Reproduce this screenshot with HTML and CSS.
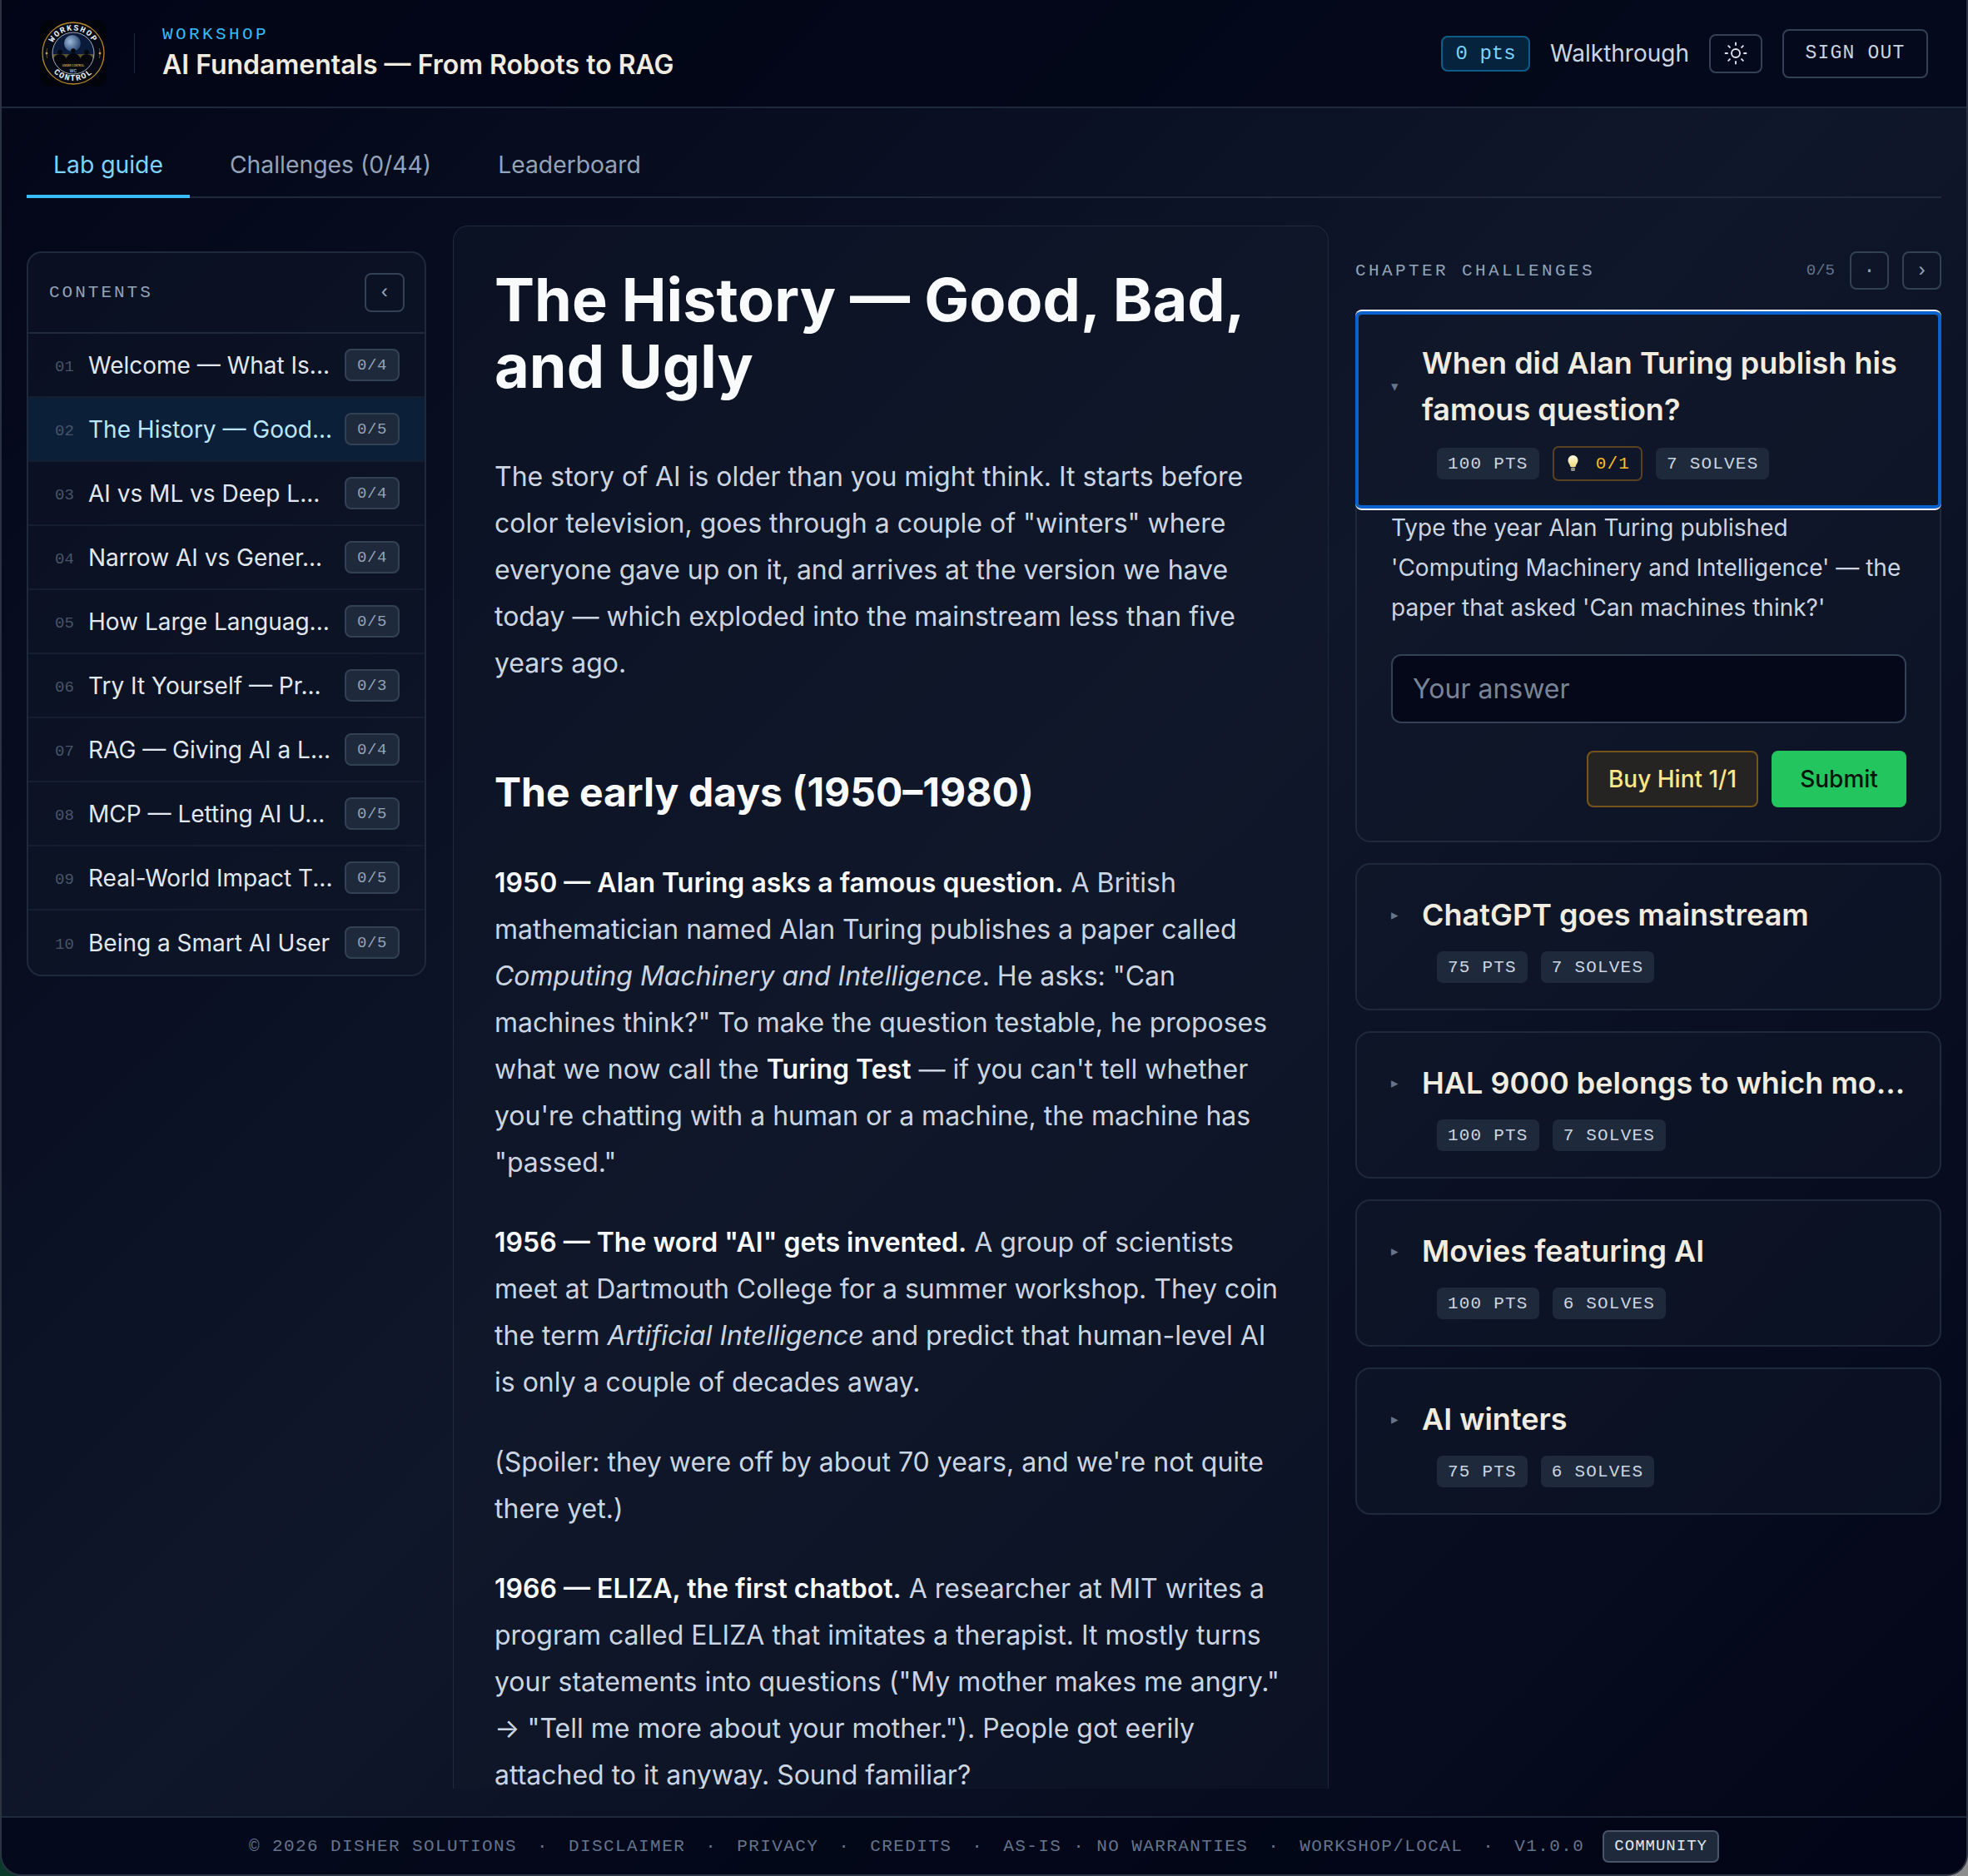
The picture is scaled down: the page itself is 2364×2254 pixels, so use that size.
FILE: index.html
```html
<!DOCTYPE html>
<html lang="en">
<head>
    <meta charset="UTF-8">
    <meta name="viewport" content="width=device-width, initial-scale=1.0">
    <title>AI Fundamentals — From Robots to RAG</title>
    <link rel="stylesheet" href="styles.css">
</head>
<body>
<div class="app">
    <!-- Top bar -->
    <header class="topbar">
        <div class="brand">
            <svg class="logo" viewBox="0 0 80 80" width="80" height="80">
                <defs>
                    <path id="arc-top" d="M12.5 40a27.5 27.5 0 0 1 55 0"/>
                    <path id="arc-bottom" d="M7 40a33 33 0 0 0 66 0"/>
                    <clipPath id="inner-clip"><circle cx="40" cy="40" r="25"/></clipPath>
                    <radialGradient id="moon" cx="0.35" cy="0.4" r="0.75">
                        <stop offset="0" stop-color="#9db9da"/>
                        <stop offset="1" stop-color="#1b3560"/>
                    </radialGradient>
                </defs>
                <rect width="80" height="80" rx="14" fill="#02040c"/>
                <circle cx="40" cy="40" r="37" fill="#060a14" stroke="#b8862d" stroke-width="1.3"/>
                <path d="M8.5 34a32 32 0 0 0 0 12M71.500 34a32 32 0 0 1 0 12" fill="none" stroke="#8c6a26" stroke-width="0.7"/>
                <circle cx="40" cy="40" r="25" fill="#0a1a3a"/>
                <g clip-path="url(#inner-clip)">
                    <circle cx="39" cy="28" r="10" fill="url(#moon)"/>
                    <rect x="14" y="41" width="52" height="6" fill="#5c5330"/>
                    <g fill="#05070d">
                        <circle cx="24" cy="38.500" r="2.800"/>
                        <path d="M15 54c0-9 4-13 9-13s9 4 9 13z"/>
                        <circle cx="40" cy="37" r="2.800"/>
                        <path d="M30 54c0-10 5-14 10-14s10 4 10 14z"/>
                        <circle cx="56" cy="38.500" r="2.800"/>
                        <path d="M47 54c0-9 4-13 9-13s9 4 9 13z"/>
                    </g>
                    <rect x="14" y="52" width="52" height="14" fill="#060a14"/>
                </g>
                <circle cx="40" cy="40" r="25" fill="none" stroke="#c9d1dc" stroke-width="0.8"/>
                <text class="logo-tiny" x="40" y="56" text-anchor="middle">UNDER CONTROL</text>
                <text class="logo-wc" x="40" y="62.500" text-anchor="middle">WC</text>
                <text class="logo-arc"><textPath href="#arc-top" startOffset="50%" text-anchor="middle">WORKSHOP</textPath></text>
                <text class="logo-arc"><textPath href="#arc-bottom" startOffset="50%" text-anchor="middle">CONTROL</textPath></text>
                <circle cx="8" cy="40" r="1.300" fill="#d9a441"/>
                <circle cx="72" cy="40" r="1.300" fill="#d9a441"/>
            </svg>
            <span class="brand-divider"></span>
            <div class="brand-text">
                <span class="brand-kicker">WORKSHOP</span>
                <span class="brand-title">AI Fundamentals — From Robots to RAG</span>
            </div>
        </div>
        <div class="topbar-actions">
            <span class="pts-pill">0 pts</span>
            <a class="walkthrough">Walkthrough</a>
            <button class="icon-btn theme-btn" aria-label="Toggle theme">
                <svg viewBox="0 0 24 24" width="30" height="30" fill="none" stroke="currentColor" stroke-width="1.5" stroke-linecap="round">
                    <circle cx="12" cy="12" r="4"/>
                    <path d="M12 2v2M12 20v2M4.93 4.93l1.41 1.41M17.66 17.66l1.41 1.41M2 12h2M20 12h2M6.34 17.66l-1.41 1.41M19.07 4.93l-1.41 1.41"/>
                </svg>
            </button>
            <button class="signout-btn">SIGN OUT</button>
        </div>
    </header>

    <!-- Tabs -->
    <nav class="tabs">
        <a class="tab tab-active">Lab guide</a>
        <a class="tab">Challenges (0/44)</a>
        <a class="tab">Leaderboard</a>
    </nav>

    <main class="layout">
        <!-- Chapter list -->
        <aside class="toc">
            <div class="toc-head">
                <span class="toc-label">CONTENTS</span>
                <button class="icon-btn toc-collapse">‹</button>
            </div>
            <ul class="toc-list">
                <li class="toc-row"><span class="toc-num">01</span><span class="toc-name">Welcome — What Is...</span><span class="toc-count">0/4</span></li>
                <li class="toc-row toc-row-active"><span class="toc-num">02</span><span class="toc-name">The History — Good...</span><span class="toc-count">0/5</span></li>
                <li class="toc-row"><span class="toc-num">03</span><span class="toc-name">AI vs ML vs Deep L...</span><span class="toc-count">0/4</span></li>
                <li class="toc-row"><span class="toc-num">04</span><span class="toc-name">Narrow AI vs Gener...</span><span class="toc-count">0/4</span></li>
                <li class="toc-row"><span class="toc-num">05</span><span class="toc-name">How Large Languag...</span><span class="toc-count">0/5</span></li>
                <li class="toc-row"><span class="toc-num">06</span><span class="toc-name">Try It Yourself — Pr...</span><span class="toc-count">0/3</span></li>
                <li class="toc-row"><span class="toc-num">07</span><span class="toc-name">RAG — Giving AI a L...</span><span class="toc-count">0/4</span></li>
                <li class="toc-row"><span class="toc-num">08</span><span class="toc-name">MCP — Letting AI U...</span><span class="toc-count">0/5</span></li>
                <li class="toc-row"><span class="toc-num">09</span><span class="toc-name">Real-World Impact T...</span><span class="toc-count">0/5</span></li>
                <li class="toc-row"><span class="toc-num">10</span><span class="toc-name">Being a Smart AI User</span><span class="toc-count">0/5</span></li>
            </ul>
        </aside>

        <!-- Lesson text -->
        <article class="lesson">
            <h1>The History — Good, Bad, and Ugly</h1>
            <p>The story of AI is older than you might think. It starts before color television, goes through a couple of "winters" where everyone gave up on it, and arrives at the version we have today — which exploded into the mainstream less than five years ago.</p>
            <h2>The early days (1950–1980)</h2>
            <p><strong>1950 — Alan Turing asks a famous question.</strong> A British mathematician named Alan Turing publishes a paper called <em>Computing Machinery and Intelligence</em>. He asks: "Can machines think?" To make the question testable, he proposes what we now call the <strong>Turing Test</strong> — if you can't tell whether you're chatting with a human or a machine, the machine has "passed."</p>
            <p><strong>1956 — The word "AI" gets invented.</strong> A group of scientists meet at Dartmouth College for a summer workshop. They coin the term <em>Artificial Intelligence</em> and predict that human-level AI is only a couple of decades away.</p>
            <p>(Spoiler: they were off by about 70 years, and we're not quite there yet.)</p>
            <p><strong>1966 — ELIZA, the first chatbot.</strong> A researcher at MIT writes a program called ELIZA that imitates a therapist. It mostly turns your statements into questions ("My mother makes me angry." → "Tell me more about your mother."). People got eerily attached to it anyway. Sound familiar?</p>
        </article>

        <!-- Challenges for this chapter -->
        <section class="challenges">
            <div class="challenges-head">
                <span class="challenges-label">CHAPTER CHALLENGES</span>
                <span class="challenges-count">0/5</span>
                <button class="icon-btn pager-btn">·</button>
                <button class="icon-btn pager-btn">›</button>
            </div>

            <div class="card">
                <div class="card-head card-head-focus">
                    <div class="card-title-row">
                        <span class="card-arrow">▾</span>
                        <h3>When did Alan Turing publish his famous question?</h3>
                    </div>
                    <div class="chips">
                        <span class="chip">100 PTS</span>
                        <span class="chip chip-hint">
                            <svg viewBox="0 0 14 22" width="15" height="22">
                                <defs>
                                    <linearGradient id="bulb" x1="0" y1="0" x2="0" y2="1">
                                        <stop offset="0" stop-color="#fffbe6"/>
                                        <stop offset="1" stop-color="#f2dc7c"/>
                                    </linearGradient>
                                </defs>
                                <path d="M7 1a6 6 0 0 0-6 6c0 3 2 4 3 8h6c1-4 3-5 3-8a6 6 0 0 0-6-6z" fill="url(#bulb)"/>
                                <rect x="4.500" y="15.500" width="5" height="4.500" rx="1.500" fill="#8d8d86"/>
                            </svg>
                            0/1
                        </span>
                        <span class="chip">7 SOLVES</span>
                    </div>
                </div>
                <div class="card-body">
                    <p class="card-desc">Type the year Alan Turing published 'Computing Machinery and Intelligence' — the paper that asked 'Can machines think?'</p>
                    <input class="answer" type="text" placeholder="Your answer">
                    <div class="card-actions">
                        <button class="btn btn-hint">Buy Hint 1/1</button>
                        <button class="btn btn-submit">Submit</button>
                    </div>
                </div>
            </div>

            <div class="card">
                <div class="card-head">
                    <div class="card-title-row"><span class="card-arrow">▸</span><h3>ChatGPT goes mainstream</h3></div>
                    <div class="chips"><span class="chip">75 PTS</span><span class="chip">7 SOLVES</span></div>
                </div>
            </div>
            <div class="card">
                <div class="card-head">
                    <div class="card-title-row"><span class="card-arrow">▸</span><h3>HAL 9000 belongs to which mo...</h3></div>
                    <div class="chips"><span class="chip">100 PTS</span><span class="chip">7 SOLVES</span></div>
                </div>
            </div>
            <div class="card">
                <div class="card-head">
                    <div class="card-title-row"><span class="card-arrow">▸</span><h3>Movies featuring AI</h3></div>
                    <div class="chips"><span class="chip">100 PTS</span><span class="chip">6 SOLVES</span></div>
                </div>
            </div>
            <div class="card">
                <div class="card-head">
                    <div class="card-title-row"><span class="card-arrow">▸</span><h3>AI winters</h3></div>
                    <div class="chips"><span class="chip">75 PTS</span><span class="chip">6 SOLVES</span></div>
                </div>
            </div>
        </section>
    </main>

    <footer class="footer">
        <span>© 2026 DISHER SOLUTIONS</span><span class="dot">·</span>
        <a>DISCLAIMER</a><span class="dot">·</span>
        <a>PRIVACY</a><span class="dot">·</span>
        <a>CREDITS</a><span class="dot">·</span>
        <span>AS-IS · NO WARRANTIES</span><span class="dot">·</span>
        <span>WORKSHOP/LOCAL</span><span class="dot">·</span>
        <span>V1.0.0</span>
        <span class="edition">COMMUNITY</span>
    </footer>
</div>
</body>
</html>
```

FILE: styles.css
```css
* {
    box-sizing: border-box;
}

body {
    margin: 0;
    height: 2254px;
    overflow: hidden;
    background: linear-gradient(90deg, #0c3a2a 50%, #8c8c8c 50%);
    font-family: 'Inter', 'Liberation Sans', sans-serif;
    color: #cbd5e1;
}

button {
    font-family: inherit;
    cursor: pointer;
}

.app {
    height: 2254px;
    display: flex;
    flex-direction: column;
    overflow: hidden;
    border-left: 2px solid #2b3242;
    border-right: 2px solid #2b3242;
    border-bottom: 2px solid #2b3242;
    border-radius: 0 0 26px 26px;
    background: linear-gradient(135deg, #020617 0%, #0f172a 50%, #020617 100%);
}

/* Top bar */
.topbar {
    height: 130px;
    flex: none;
    display: flex;
    align-items: center;
    justify-content: space-between;
    padding: 0 46px;
    background: rgba(2, 6, 23, 0.75);
    border-bottom: 2px solid #1e293b;
}

.brand {
    display: flex;
    align-items: center;
}

.logo {
    display: block;
}

.logo-arc {
    font-family: 'Liberation Mono', monospace;
    font-size: 10px;
    font-weight: bold;
    letter-spacing: 1.5px;
    fill: #e8edf4;
}

.logo-tiny {
    font-family: 'Liberation Sans', sans-serif;
    font-size: 3px;
    font-weight: bold;
    fill: #c9a24a;
}

.logo-wc {
    font-family: 'Liberation Sans', sans-serif;
    font-size: 5px;
    font-weight: bold;
    fill: #8fb4dc;
}

.brand-divider {
    width: 1px;
    height: 48px;
    margin: 0 33px;
    background: #1e293b;
}

.brand-text {
    display: flex;
    flex-direction: column;
    gap: 4px;
}

.brand-kicker {
    font-family: 'Liberation Mono', monospace;
    font-size: 21px;
    line-height: 24px;
    letter-spacing: 3.4px;
    color: #38bdf8;
}

.brand-title {
    font-size: 32px;
    line-height: 40px;
    font-weight: 600;
    color: #f1ece0;
}

.topbar-actions {
    display: flex;
    align-items: center;
}

.pts-pill {
    height: 43px;
    width: 107px;
    display: flex;
    align-items: center;
    justify-content: center;
    font-family: 'Liberation Mono', monospace;
    font-size: 24px;
    color: #7dd3fc;
    background: #06233d;
    border: 2px solid #0c5d88;
    border-radius: 8px;
}

.walkthrough {
    margin: 0 24px;
    font-size: 28px;
    color: #cbd5e1;
}

.icon-btn {
    padding: 0;
    display: flex;
    align-items: center;
    justify-content: center;
    background: transparent;
    border: 2px solid #334155;
    border-radius: 8px;
    color: #94a3b8;
}

.theme-btn {
    width: 64px;
    height: 47px;
    margin-right: 24px;
    color: #e2e8f0;
}

.signout-btn {
    width: 175px;
    height: 59px;
    background: transparent;
    border: 2px solid #334155;
    border-radius: 8px;
    font-family: 'Liberation Mono', monospace;
    font-size: 23px;
    letter-spacing: 1.2px;
    color: #cbd5e1;
}

/* Tabs */
.tabs {
    flex: none;
    margin: 27px 30px 0;
    display: flex;
    gap: 16px;
    border-bottom: 2px solid #1e293b;
}

.tab {
    height: 81px;
    margin-bottom: -2px;
    padding: 5px 32px 0;
    display: flex;
    align-items: center;
    font-size: 28.3px;
    color: #94a3b8;
    border-bottom: 4px solid transparent;
}

.tab-active {
    color: #7dd3fc;
    border-bottom-color: #38bdf8;
}

/* Three columns */
.layout {
    flex: 1;
    min-height: 0;
    margin: 33px 30px;
    display: grid;
    grid-template-columns: 480px 1fr 704px;
    gap: 32px;
    overflow: hidden;
}

/* Contents */
.toc {
    align-self: start;
    margin-top: 31px;
    background: rgba(15, 23, 42, 0.5);
    border: 2px solid #1e293b;
    border-radius: 18px;
    overflow: hidden;
}

.toc-head {
    height: 97px;
    display: flex;
    align-items: center;
    justify-content: space-between;
    padding: 0 24px 0 25px;
    border-bottom: 2px solid #1e293b;
}

.toc-label {
    font-family: 'Liberation Mono', monospace;
    font-size: 21px;
    letter-spacing: 3px;
    color: #94a3b8;
}

.toc-collapse {
    width: 48px;
    height: 47px;
    font-family: 'Liberation Mono', monospace;
    font-size: 24px;
}

.toc-list {
    list-style: none;
    margin: 0;
    padding: 0;
}

.toc-row {
    height: 77px;
    display: flex;
    align-items: center;
    padding: 0 30px 0 32px;
    border-bottom: 2px solid #141e30;
}

.toc-row:last-child {
    border-bottom: none;
}

.toc-row-active {
    background: #0c1f38;
}

.toc-num {
    width: 40px;
    flex: none;
    padding-top: 4px;
    font-family: 'Liberation Mono', monospace;
    font-size: 19px;
    color: #475569;
}

.toc-name {
    flex: 1;
    min-width: 0;
    white-space: nowrap;
    font-size: 28px;
    color: #e2e8f0;
}

.toc-row-active .toc-name {
    color: #bae6fd;
}

.toc-count {
    width: 66px;
    height: 39px;
    flex: none;
    display: flex;
    align-items: center;
    justify-content: center;
    font-family: 'Liberation Mono', monospace;
    font-size: 19px;
    letter-spacing: 0.6px;
    color: #94a3b8;
    background: #1e293b;
    border: 2px solid #334155;
    border-radius: 8px;
}

/* Lesson */
.lesson {
    padding: 48px 49px 0;
    background: rgba(15, 23, 42, 0.5);
    border: 1px solid #1e293b;
    border-bottom: none;
    border-radius: 18px 18px 0 0;
    overflow: hidden;
    font-size: 32px;
    line-height: 56px;
    color: #cbd5e1;
}

.lesson h1 {
    margin: 0 0 65px;
    font-size: 72px;
    line-height: 80px;
    font-weight: 700;
    color: #f8fafc;
}

.lesson h2 {
    margin: 97px 0 51px;
    font-size: 48px;
    line-height: 60px;
    font-weight: 700;
    color: #f8fafc;
}

.lesson p {
    margin: 0 0 40px;
}

.lesson strong {
    font-weight: 600;
    color: #f8fafc;
}

/* Right column */
.challenges {
    padding-top: 31px;
    display: flex;
    flex-direction: column;
    gap: 25px;
}

.challenges-head {
    height: 46px;
    margin-bottom: -1px;
    display: flex;
    align-items: center;
    gap: 16px;
}

.challenges-label {
    flex: 1;
    font-family: 'Liberation Mono', monospace;
    font-size: 21px;
    letter-spacing: 3.4px;
    color: #94a3b8;
}

.challenges-count {
    margin-right: 2px;
    font-family: 'Liberation Mono', monospace;
    font-size: 19px;
    color: #64748b;
}

.pager-btn {
    width: 47px;
    height: 46px;
    font-family: 'Liberation Mono', monospace;
    font-size: 24px;
}

.card {
    background: rgba(15, 23, 42, 0.5);
    border: 2px solid #1e293b;
    border-radius: 18px;
}

.card-head {
    padding: 32px 41px 31px;
}

.card-head-focus {
    margin: -2px;
    padding: 34px 43px 35px;
    border-top: 2px solid #f4f6fa;
    border-bottom: 2px solid #f4f6fa;
    border-radius: 8px;
    box-shadow: inset 0 0 0 4px #0a62cf;
}

.card-title-row {
    display: flex;
    align-items: center;
}

.card-arrow {
    width: 37px;
    flex: none;
    font-family: 'DejaVu Sans', sans-serif;
    font-size: 17px;
    color: #64748b;
}

.card h3 {
    margin: 0;
    font-size: 36px;
    line-height: 56px;
    font-weight: 600;
    color: #f1ece0;
}

.chips {
    margin: 16px 0 0 55px;
    display: flex;
    align-items: center;
    gap: 16px;
}

.card-head-focus .chips {
    margin-top: 18px;
}

.chip {
    height: 38px;
    padding: 0 13px;
    display: flex;
    align-items: center;
    gap: 12px;
    font-family: 'Liberation Mono', monospace;
    font-size: 21px;
    letter-spacing: 1.2px;
    color: #cbd5e1;
    background: #1e293b;
    border-radius: 7px;
}

.chip-hint {
    height: 42px;
    margin: -2px 0;
    padding: 0 13px 0 15px;
    gap: 20px;
    color: #fbbf24;
    background: transparent;
    border: 2px solid #5a4220;
}

.card-body {
    padding: 0 40px 40px 41px;
}

.card-desc {
    margin: -3px 0 32px;
    font-size: 28px;
    line-height: 48px;
    color: #cbd5e1;
}

.answer {
    display: block;
    width: 100%;
    height: 83px;
    padding: 0 24px;
    font-family: inherit;
    font-size: 32px;
    color: #e2e8f0;
    background: #040818;
    border: 2px solid #334155;
    border-radius: 12px;
}

.answer::placeholder {
    color: #7b8496;
}

.card-actions {
    margin-top: 33px;
    display: flex;
    justify-content: flex-end;
    gap: 16px;
}

.btn {
    height: 68px;
    font-size: 28px;
    font-weight: 500;
    border-radius: 8px;
}

.btn-hint {
    width: 206px;
    color: #fde68a;
    background: #262423;
    border: 2px solid #78541a;
}

.btn-submit {
    width: 162px;
    color: #04140a;
    background: #22c55e;
    border: none;
}

/* Footer */
.footer {
    height: 70px;
    flex: none;
    display: flex;
    align-items: center;
    justify-content: center;
    font-family: 'Liberation Mono', monospace;
    font-size: 21px;
    letter-spacing: 1.4px;
    color: #64748b;
    background: rgba(2, 6, 23, 0.75);
    border-top: 2px solid #1e293b;
}

.footer .dot {
    margin: 0 24px;
}

.edition {
    height: 39px;
    margin-left: 22px;
    padding: 0 12px;
    display: flex;
    align-items: center;
    font-size: 19px;
    letter-spacing: 1px;
    color: #e2e8f0;
    background: #1e293b;
    border: 2px solid #475569;
    border-radius: 7px;
}
```
